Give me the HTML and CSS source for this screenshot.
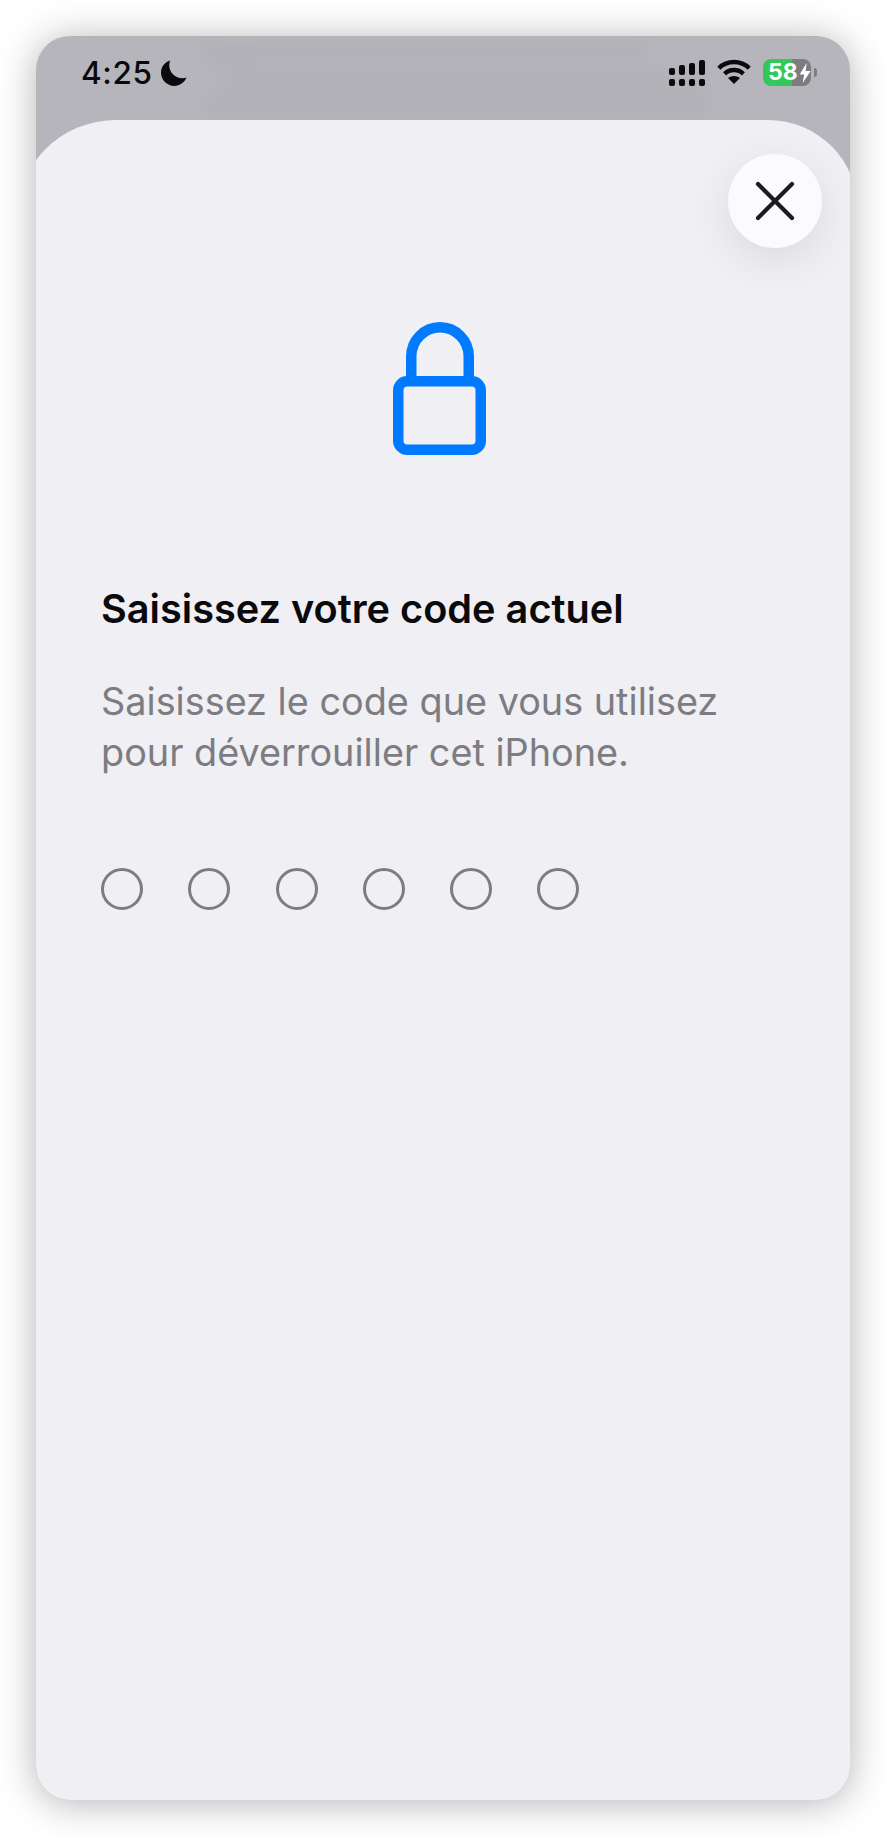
FILE: index.html
```html
<!DOCTYPE html>
<html lang="fr">
<head>
<meta charset="utf-8">
<title>Saisissez votre code actuel</title>
<link rel="stylesheet" href="styles.css">
</head>
<body>
<main class="phone">
  <header class="status">
    <div class="backdrop">
      <span class="smear smear-a"></span>
      <span class="smear smear-b"></span>
      <span class="smear smear-c"></span>
    </div>
    <div class="status-left">
      <span class="time">4:25</span>
      <svg class="moon" viewBox="0 0 26 26"><path d="M9.2 0.4C3.8 2 0 6.9 0 12.6 0 20 5.9 26 13.2 26c5.6 0 10.4-3.4 12.3-8.4-1.2 0.4-2.6 0.6-4 0.6C14.2 18.2 8.2 12.2 8.2 4.900c0-1.600 0.400-3.100 1-4.500z" fill="#0a0a0c"/></svg>
    </div>
    <div class="status-right">
      <svg class="signal" viewBox="0 0 36 26" fill="#0a0a0c">
        <rect x="0" y="8" width="6" height="7" rx="2"/><rect x="10" y="5" width="6" height="10" rx="2"/><rect x="20" y="3" width="6" height="12" rx="2"/><rect x="30" y="0" width="6" height="15" rx="2"/>
        <rect x="0" y="19" width="6" height="7" rx="2"/><rect x="10" y="19" width="6" height="7" rx="2"/><rect x="20" y="19" width="6" height="7" rx="2"/><rect x="30" y="19" width="6" height="7" rx="2"/>
      </svg>
      <svg class="wifi" viewBox="0 0 34 25" fill="none" stroke="#0a0a0c" stroke-width="4.4">
        <path d="M1.8 9.2C10.2 1 23.8 1 32.2 9.2"/>
        <path d="M7.6 14.8C12.8 9.8 21.2 9.8 26.4 14.8"/>
        <path d="M17 25l-6-6c3.4-2.8 8.6-2.8 12 0z" fill="#0a0a0c" stroke="none"/>
      </svg>
      <div class="battery">
        <div class="battery-body">
          <span class="battery-level">58</span>
          <svg class="bolt" viewBox="0 0 12 20"><path d="M7.5 0L0.5 11.5H5L3.5 20 11.5 8H6.5z" fill="#fff"/></svg>
        </div>
        <span class="battery-nub"></span>
      </div>
    </div>
  </header>
  <section class="sheet">
    <button class="close" type="button" aria-label="Fermer">
      <svg viewBox="0 0 40 40" width="40" height="40" fill="none" stroke="#1c1c1e" stroke-width="4.2" stroke-linecap="round"><path d="M3 3l34 34M37 3L3 37"/></svg>
    </button>
    <div class="lock-row">
      <svg class="lock" viewBox="0 0 93 133" fill="none" stroke="#007aff" stroke-width="10.5">
        <path d="M18.25 60V34.500A28.750 29.250 0 0 1 75.750 34.500V60"/>
        <rect x="5.250" y="59.250" width="82.500" height="68.500" rx="9"/>
      </svg>
    </div>
    <h1 class="title">Saisissez votre code actuel</h1>
    <p class="desc">Saisissez le code que vous utilisez<br>pour déverrouiller cet iPhone.</p>
    <div class="dots">
      <span class="dot"></span><span class="dot"></span><span class="dot"></span>
      <span class="dot"></span><span class="dot"></span><span class="dot"></span>
    </div>
  </section>
</main>
</body>
</html>
```
FILE: styles.css
```css
* { box-sizing: border-box; }
html, body { margin: 0; padding: 0; background: #fff; }
body { height: 1836px; overflow: hidden; padding: 36px; font-family: Inter, "Liberation Sans", sans-serif; }

.phone {
  position: relative;
  width: 814px;
  height: 1764px;
  border-radius: 34px;
  overflow: hidden;
  background: #b6b5bb;
  box-shadow: 0 3px 38px rgba(0, 0, 0, .3);
  display: flex;
  flex-direction: column;
}

.status {
  position: relative;
  height: 84px;
  flex: none;
  display: flex;
  justify-content: space-between;
  align-items: flex-start;
}
.backdrop { position: absolute; inset: 0; overflow: hidden; }
.smear { position: absolute; height: 14px; background: #a9a8ae; filter: blur(8px); opacity: .4; }
.smear-a { left: 170px; width: 440px; top: 10px; }
.smear-b { left: 190px; width: 480px; top: 36px; }
.smear-c { left: 170px; width: 500px; top: 62px; }

.status-left { position: relative; display: flex; align-items: center; gap: 8px; margin: 24px 0 0 45px; }
.time { font-size: 31.500px; line-height: 26px; font-weight: 500; letter-spacing: .6px; color: #0a0a0c; }
.moon { width: 26px; height: 26px; }

.status-right { position: relative; display: flex; align-items: flex-start; margin: 24px 33px 0 0; }
.signal { width: 36px; height: 26px; margin-right: 12px; }
.wifi { width: 34px; height: 25px; margin-right: 12px; margin-top: -1px; }

.battery { display: flex; align-items: center; margin-top: -1px; }
.battery-body {
  width: 48px;
  height: 27px;
  border-radius: 8px;
  background: linear-gradient(90deg, #34c759 0, #34c759 29px, #7d7d80 29px);
  display: flex;
  align-items: center;
  padding-left: 5px;
}
.battery-level { font-size: 23px; line-height: 27px; font-weight: 700; color: #fff; }
.bolt { width: 13px; height: 20px; margin-left: 1px; }
.battery-nub { width: 3px; height: 9px; margin-left: 3px; background: #7d7d80; border-radius: 0 3px 3px 0; }

.sheet {
  position: relative;
  flex: 1;
  margin: 0 -8px 0 -20px;
  padding: 0 0 0 85px;
  background: #efeff4;
  border-radius: 100px 90px 0 0;
}

.close {
  position: absolute;
  left: 712px;
  top: 34px;
  width: 94px;
  height: 94px;
  padding: 0;
  border: 0;
  border-radius: 50%;
  background: #fbfbfe;
  box-shadow: 0 12px 44px rgba(0, 0, 0, .09);
  display: flex;
  align-items: center;
  justify-content: center;
}

.lock-row { padding: 202px 0 0 292px; }
.lock { display: block; width: 93px; height: 133px; }

.title { margin: 131px 0 0; font-size: 39.700px; line-height: 46px; font-weight: 600; color: #0a0a0c; }
.desc { margin: 44px 0 0; font-size: 37.800px; line-height: 51px; font-weight: 400; color: #7c7c82; }

.dots { display: flex; gap: 45.300px; margin-top: 90px; }
.dot { width: 42px; height: 42px; border: 3px solid #7c7c82; border-radius: 50%; }
```
